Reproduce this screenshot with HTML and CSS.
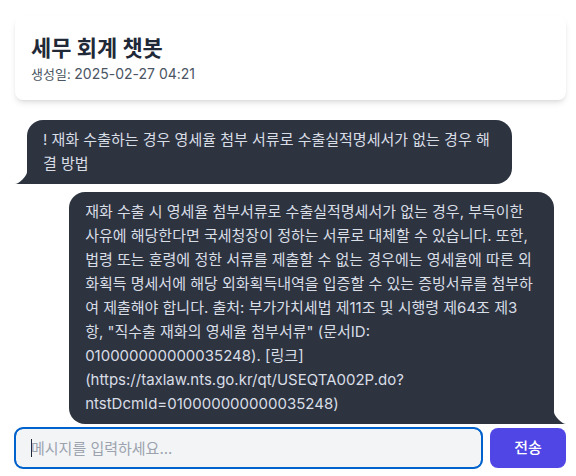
FILE: index.html
```html
<!DOCTYPE html>
<html lang="ko">
<head>
<meta charset="utf-8">
<meta name="viewport" content="width=device-width, initial-scale=1">
<title>세무 회계 챗봇</title>
<link rel="stylesheet" href="styles.css">
</head>
<body>
<main class="app">
  <header class="card">
    <h1 class="title">세무 회계 챗봇</h1>
    <p class="created">생성일: <time class="stamp">2025-02-27 04:21</time></p>
  </header>
  <section class="messages">
    <div class="chat chat-start">
      <svg class="tail" viewBox="0 0 12 12" aria-hidden="true"><path d="M0 12H12V0C12 4 4 12 0 12Z"/></svg>
      <div class="bubble">! 재화 수출하는 경우 영세율 첨부 서류로 수출실적명세서가 없는 경우 해<br>결 방법</div>
    </div>
    <div class="chat chat-end">
      <div class="bubble">재화 수출 시 영세율 첨부서류로 수출실적명세서가 없는 경우, 부득이한<br>사유에 해당한다면 국세청장이 정하는 서류로 대체할 수 있습니다. 또한,<br>법령 또는 훈령에 정한 서류를 제출할 수 없는 경우에는 영세율에 따른 외<br>화획득 명세서에 해당 외화획득내역을 입증할 수 있는 증빙서류를 첨부하<br>여 제출해야 합니다. 출처: 부가가치세법 제11조 및 시행령 제64조 제3<br>항, "직수출 재화의 영세율 첨부서류" (문서ID:<br>010000000000035248). [링크]<br>(https://taxlaw.nts.go.kr/qt/USEQTA002P.do?<br>ntstDcmId=010000000000035248)</div>
      <svg class="tail" viewBox="0 0 12 12" aria-hidden="true"><path d="M12 12H0V0C0 4 8 12 12 12Z"/></svg>
    </div>
  </section>
  <form class="composer">
    <input class="field" type="text" aria-label="메시지" placeholder="메시지를 입력하세요...">
    <button class="send" type="button">전송</button>
  </form>
</main>
</body>
</html>
```
FILE: styles.css
```css
* {
  box-sizing: border-box;
}

body {
  margin: 0;
  background: #fff;
  color: #1f2937;
  font-family: Inter, "Noto Sans CJK KR", sans-serif;
  font-size: 15px;
  line-height: 24px;
}

.app {
  padding: 16px 10px 8px 15px;
}

.card {
  padding: 16px;
  margin-bottom: 16px;
  border-radius: 8px;
  background: #fff;
  box-shadow: 0 4px 6px -1px rgb(0 0 0 / 0.1), 0 2px 4px -2px rgb(0 0 0 / 0.1);
}

.title {
  margin: 0;
  font-size: 22px;
  font-weight: 700;
  line-height: 32px;
}

.created {
  margin: 0;
  color: #4b5563;
  font-size: 13px;
  line-height: 20px;
}

.stamp {
  font-size: 14px;
}

.chat {
  display: flex;
  align-items: flex-end;
  padding: 4px 0;
}

.chat-end {
  justify-content: flex-end;
}

.bubble {
  width: 88%;
  min-height: 48px;
  padding: 8px 0 8px 16px;
  border-radius: 16px;
  background: #2d3440;
  color: #d9dde6;
}

.chat-start .bubble {
  border-bottom-left-radius: 0;
}

.chat-end .bubble {
  border-bottom-right-radius: 0;
}

.tail {
  flex: none;
  width: 12px;
  height: 12px;
  fill: #2d3440;
}

.composer {
  display: flex;
  gap: 8px;
}

/* The message box is drawn in its focused state, ring and text cursor included. */
.field {
  flex: 1;
  min-width: 0;
  height: 40px;
  padding: 8px 15px;
  border: 1px solid #0062cc;
  outline: 2px solid #0062cc;
  outline-offset: -1px;
  border-radius: 8px;
  background: #f3f4f6 linear-gradient(#1f2937, #1f2937) 15px center / 1px 18px no-repeat;
  color: #1f2937;
  font: inherit;
}

.field::placeholder {
  color: #9ca3af;
  opacity: 1;
}

.send {
  width: 76px;
  height: 40px;
  padding: 0;
  border: 0;
  border-radius: 8px;
  background: #4f46e5;
  color: #fff;
  font: inherit;
  font-weight: 500;
}
```
